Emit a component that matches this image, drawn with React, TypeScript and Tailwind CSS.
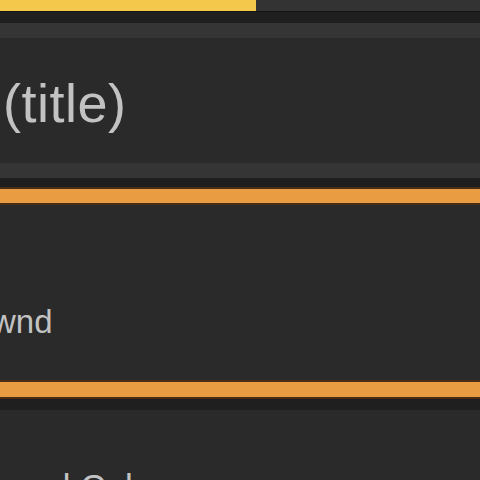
import React from "react";

// Stacked settings rows: progress bar on top, two orange separators
const App: React.FC = () => {
  return (
    <div
      className="w-[480px] h-[480px] overflow-hidden bg-[#2a2a2a] flex flex-col text-[#c2c2c2]"
      style={{ fontFamily: '"Liberation Sans", Arial, sans-serif' }}
    >
      {/* Top progress bar */}
      <div className="flex h-[11px] shrink-0">
        <div className="w-[256px] bg-[#f3c84b]" />
        <div className="flex-1 bg-[#333333]" />
      </div>
      <div className="h-[12px] shrink-0 bg-[#1f1f1f] border-t border-[#151515]" />
      <div className="h-[15px] shrink-0 bg-[#353535]" />

      {/* Title row */}
      <div className="h-[125px] shrink-0 pt-[38px] pl-[3px] overflow-hidden">
        <span className="block text-[54px] leading-none tracking-[0.5px] whitespace-nowrap">(title)</span>
      </div>
      <div className="h-[15px] shrink-0 bg-[#353535]" />
      <div className="h-[9px] shrink-0 bg-[#1e1e1e]" />

      {/* Orange separator */}
      <div className="h-[18px] shrink-0 bg-[#e99c42] border-y-2 border-[#4a2e14]" />

      {/* wnd row */}
      <div className="h-[175px] shrink-0 pt-[100px] overflow-hidden">
        <span className="block text-[33px] leading-none whitespace-nowrap ml-[-8px]">wnd</span>
      </div>

      {/* Orange separator */}
      <div className="h-[19px] shrink-0 bg-[#e99c42] border-y-2 border-[#4a2e14]" />
      <div className="h-[11px] shrink-0 bg-[#1f1f1f]" />

      {/* Next row, cut off */}
      <div className="flex-1 pt-[59px] overflow-hidden">
        <span className="block text-[35px] leading-none whitespace-nowrap ml-[-19px]">round Color</span>
      </div>
    </div>
  );
};

export default App;
